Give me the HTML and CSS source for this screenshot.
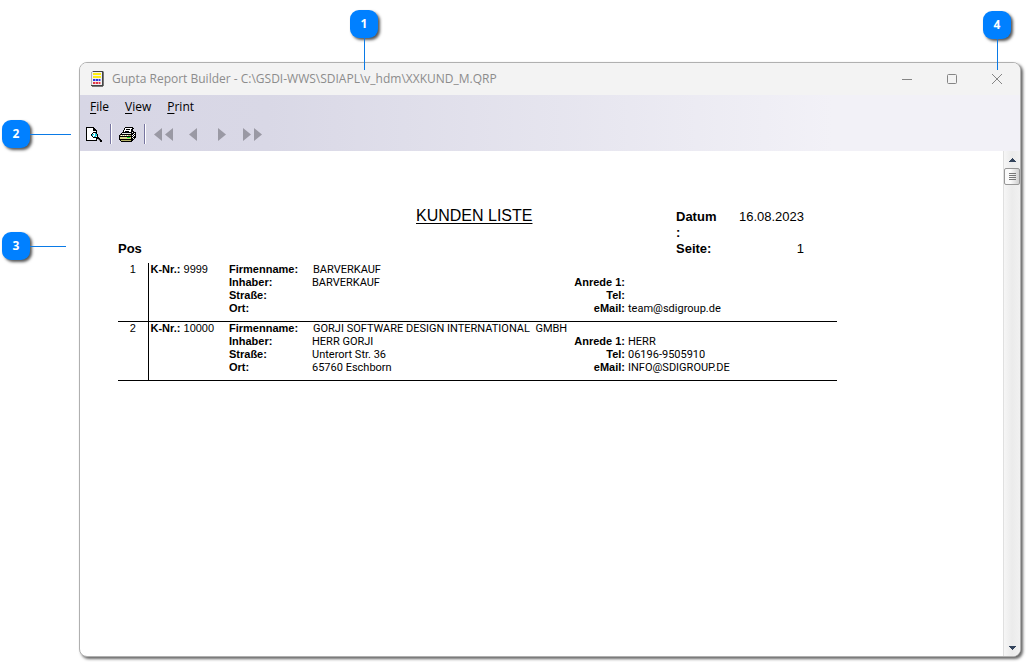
FILE: index.html
```
<!DOCTYPE html>
<html lang="de">
<head>
<meta charset="utf-8">
<title>Gupta Report Builder</title>
<link rel="stylesheet" href="styles.css">
</head>
<body>
<main class="window">
  <header class="titlebar">
    <svg class="app-icon" width="14" height="16" viewBox="0 0 14 16" shape-rendering="crispEdges">
      <path fill="#b4b4b4" d="M1 0h12v15H0V1h1z"/>
      <path fill="#444" d="M11 1h1v13h-1zM0 14h12v1H0zM2 0h10v1H2z"/>
      <path fill="#777" d="M12 1h1v14h-1zM1 15h11v1H1z"/>
      <path fill="#f0f0f0" d="M1 1h10v13H1z"/>
      <path fill="#ffee10" d="M2 2h8v2H2zM2 5h8v2H2z"/>
      <path fill="#98a0ee" d="M2 8h8v2H2z"/>
      <path fill="#3038d8" d="M2 8h2v2H2zM5 8h2v2H5zM8 8h1v2H8z"/>
      <path fill="#f2a0a8" d="M2 11h8v2H2z"/>
      <path fill="#e03848" d="M2 11h2v2H2zM5 11h2v2H5zM8 11h1v2H8z"/>
    </svg>
    <h1 class="title">Gupta Report Builder - C:\GSDI-WWS\SDIAPL\v_hdm\XXKUND_M.QRP</h1>
    <div class="controls">
      <button class="control" aria-label="Minimieren"><svg width="12" height="12" viewBox="0 0 12 12"><path d="M1 6.500h10"/></svg></button>
      <button class="control" aria-label="Maximieren"><svg width="12" height="12" viewBox="0 0 12 12"><rect x="1.500" y="1.500" width="9" height="9" rx="1"/></svg></button>
      <button class="control" aria-label="Schließen"><svg width="12" height="12" viewBox="0 0 12 12"><path d="M1 1l10 10M11 1L1 11"/></svg></button>
    </div>
  </header>
  <div class="commands">
    <nav class="menu">
      <button class="menu-item"><u>F</u>ile</button>
      <button class="menu-item"><u>V</u>iew</button>
      <button class="menu-item"><u>P</u>rint</button>
    </nav>
    <div class="toolbar">
      <button class="tool" aria-label="Preview">
        <svg width="16" height="15" viewBox="0 0 16 15" shape-rendering="crispEdges">
          <path fill="#000" d="M0 0h8v1h1v1h1v1h1v11H0z"/>
          <path fill="#fff" d="M1 1h6v3h3v9H1z"/>
          <path fill="#000" d="M8 1h1v2h1v1H7V1zM7 5h3v1h1v1h1v3h1v1h1v1h1v1h1v2h-2v-1h-1v-1h-1v-1h-1v-1H7v-1H6V9H5V7h1V6h1z"/>
          <path fill="#fff" d="M7 6h3v1h1v3H7V9H6V7h1z"/>
          <path fill="#18c8dc" d="M6 7h2v1H7v1H6zM9 6h1v1h1v2h-1v1H8V9h1z"/>
          <path fill="#888" d="M12 12h1v1h1v1h-1v-1h-1z"/>
        </svg>
      </button>
      <span class="separator"></span>
      <button class="tool" aria-label="Print">
        <svg width="17" height="15" viewBox="0 0 17 15" shape-rendering="crispEdges">
          <path fill="#000" d="M6 0h8v1h1v1h-1v2h1v1h2v6h-1v1h-1v1h-1v1h-1v1H2v-1H1v-1H0V8h1V7h1V6h1V5h1V3h1V1h1z"/>
          <path fill="#fff" d="M6 1h7v1h-1v3H5V3h1z"/>
          <path fill="#000" d="M7 2h4v1H7zM6 4h4v1H6z"/>
          <path fill="#e8e8e8" d="M3 6h9v1H3zM13 5h1v1h-1z"/>
          <path fill="#b5b268" d="M1 8h11v1H1zM2 13h10v1H2z"/>
          <path fill="#dad78c" d="M1 10h11v2H1z"/>
          <path fill="#fff" d="M2 8h1v1H2zM4 8h1v1H4zM6 8h1v1H6zM8 8h1v1H8zM14 7h1v1h-1zM15 6h1v1h-1zM13 8h1v1h-1zM15 8h1v1h-1zM14 9h1v1h-1zM13 10h1v1h-1zM14 11h1v1h-1z"/>
          <path fill="#10dd20" d="M8 10h3v1H8z"/>
        </svg>
      </button>
      <span class="separator"></span>
      <button class="tool arrow wide" aria-label="Erste Seite"><svg width="19" height="13" viewBox="0 0 19 13"><path d="M8 0v13L0 6.500zM19 0v13l-8-6.500z"/></svg></button>
      <button class="tool arrow" aria-label="Vorherige Seite"><svg width="8" height="13" viewBox="0 0 8 13"><path d="M8 0v13L0 6.500z"/></svg></button>
      <button class="tool arrow" aria-label="Nächste Seite"><svg width="8" height="13" viewBox="0 0 8 13"><path d="M0 0v13l8-6.500z"/></svg></button>
      <button class="tool arrow wide" aria-label="Letzte Seite"><svg width="19" height="13" viewBox="0 0 19 13"><path d="M0 0v13l8-6.500zM11 0v13l8-6.500z"/></svg></button>
    </div>
  </div>
  <div class="viewer">
    <article class="report">
      <header class="report-head">
        <h2 class="report-title">KUNDEN LISTE</h2>
        <dl class="meta">
          <dt>Datum :</dt><dd>16.08.2023</dd>
          <dt>Seite:</dt><dd>1</dd>
        </dl>
      </header>
      <table class="customers">
        <colgroup><col class="col-pos"><col class="col-number"><col class="col-address"><col></colgroup>
        <thead><tr><th class="pos-head" colspan="4">Pos</th></tr></thead>
        <tbody>
          <tr class="record">
            <td class="pos">1</td>
            <td class="number"><b>K-Nr.:</b> 9999</td>
            <td class="address">
              <dl class="fields">
                <dt>Firmenname:</dt><dd class="company">BARVERKAUF</dd>
                <dt>Inhaber:</dt><dd>BARVERKAUF</dd>
                <dt>Straße:</dt><dd></dd>
                <dt>Ort:</dt><dd></dd>
              </dl>
            </td>
            <td class="contact">
              <dl class="fields contact-fields">
                <dt>Anrede 1:</dt><dd></dd>
                <dt>Tel:</dt><dd></dd>
                <dt>eMail:</dt><dd>team@sdigroup.de</dd>
              </dl>
            </td>
          </tr>
          <tr class="record">
            <td class="pos">2</td>
            <td class="number"><b>K-Nr.:</b> 10000</td>
            <td class="address">
              <dl class="fields">
                <dt>Firmenname:</dt><dd class="company">GORJI SOFTWARE DESIGN INTERNATIONAL&nbsp; GMBH</dd>
                <dt>Inhaber:</dt><dd>HERR GORJI</dd>
                <dt>Straße:</dt><dd>Unterort Str. 36</dd>
                <dt>Ort:</dt><dd>65760 Eschborn</dd>
              </dl>
            </td>
            <td class="contact">
              <dl class="fields contact-fields">
                <dt>Anrede 1:</dt><dd>HERR</dd>
                <dt>Tel:</dt><dd>06196-9505910</dd>
                <dt>eMail:</dt><dd>INFO@SDIGROUP.DE</dd>
              </dl>
            </td>
          </tr>
        </tbody>
      </table>
    </article>
    <div class="scrollbar">
      <button class="scroll-arrow" aria-label="Nach oben"><svg width="7" height="4" viewBox="0 0 7 4" shape-rendering="crispEdges"><path d="M3 0h1v1h1v1h1v1h1v1H0V3h1V2h1V1h1z"/></svg></button>
      <button class="scroll-thumb" aria-label="Bildlauf"><svg width="7" height="8" viewBox="0 0 7 8" shape-rendering="crispEdges"><path d="M0 0h7v1H0zM0 2h7v1H0zM0 4h7v1H0zM0 6h7v1H0z"/></svg></button>
      <button class="scroll-arrow scroll-down" aria-label="Nach unten"><svg width="7" height="4" viewBox="0 0 7 4" shape-rendering="crispEdges"><path d="M0 0h7v1H6v1H5v1H4v1H3V3H2V2H1V1H0z"/></svg></button>
    </div>
  </div>
</main>
<div class="callout vertical callout-1"><span class="badge">1</span><span class="line"></span></div>
<div class="callout horizontal callout-2"><span class="badge">2</span><span class="line"></span></div>
<div class="callout horizontal callout-3"><span class="badge">3</span><span class="line"></span></div>
<div class="callout vertical callout-4"><span class="badge">4</span><span class="line"></span></div>
</body>
</html>
```
FILE: styles.css
```
* { box-sizing: border-box; }
body {
  margin: 0;
  min-height: 100vh;
  padding: 62px 6px 8px 79px;
  display: flex;
  position: relative;
  background: #fff;
  color: #000;
  font-family: "Liberation Sans", Arial, sans-serif;
}
h1, h2, dl, dd { margin: 0; font-weight: normal; }
button { margin: 0; padding: 0; border: 0; background: none; color: inherit; font: inherit; }
svg { display: block; }

.window {
  flex: 1;
  min-width: 0;
  display: flex;
  flex-direction: column;
  border: 1px solid #b0b0b0;
  border-radius: 8px;
  overflow: hidden;
  background: #fff;
  box-shadow: 2px 2px 3px #666;
}

/* Title bar */
.titlebar {
  display: flex;
  align-items: center;
  height: 32px;
  padding: 0 1px 0 11px;
  background: #f3f3f3;
  color: #8c8c8c;
}
.title { flex: 1; margin-left: 7px; font: 12px/18px "Open Sans", "Noto Sans", sans-serif; white-space: nowrap; }
.controls { display: flex; }
.control { width: 45px; height: 30px; display: grid; place-items: center; }
.control svg { fill: none; stroke: #858585; }

/* Menu and toolbar */
.commands { height: 56px; background: linear-gradient(90deg, #d7d6e5 0%, #d9d8e6 20%, #f2f1f7 80%, #f2f1f7 100%); }
.menu { display: flex; gap: 16px; padding: 3px 10px 0; font: 12px/18px "Open Sans", "Noto Sans", sans-serif; }
.menu u { text-underline-offset: 2px; }
.toolbar { display: flex; align-items: center; height: 36px; padding-left: 6px; }
.tool { display: grid; place-items: center; }
.separator { width: 2px; height: 20px; margin: 0 8px; border-left: 1px solid #7775a0; border-right: 1px solid #fff; }
.separator + .tool { margin-left: -1px; }
.arrow { width: 29px; height: 24px; fill: #9a99a4; }
.wide { width: 20px; }
.wide + .arrow { margin-left: 5px; }
.arrow + .wide { margin-left: 6px; }

/* Report page */
.viewer { flex: 1; display: flex; justify-content: space-between; }
.report { flex: 0 1 757px; padding: 55px 0 20px 38px; }
.report-head { display: flex; justify-content: space-between; padding-right: 33px; }
.report-title { margin-left: 298px; font-size: 16px; line-height: 20px; text-decoration: underline; text-underline-offset: 2px; white-space: nowrap; }
.meta { display: grid; grid-template-columns: 46px 82px; font-size: 13px; line-height: 16px; padding-top: 3px; }
.meta dt { font-weight: bold; }
.meta dd { text-align: right; }
.customers { width: 100%; margin-top: -16px; border-collapse: collapse; table-layout: fixed; font-size: 11px; line-height: 13px; }
.col-pos { width: 30px; }
.col-number { width: 81px; }
.col-address { width: 342px; }
.pos-head { padding: 0 0 6px; font-size: 13px; line-height: 16px; text-align: left; }
.customers td { padding: 0 0 6px; vertical-align: top; border-bottom: 1px solid #000; }
.customers .pos { text-align: center; }
.customers .number { padding-left: 2px; border-left: 1px solid #000; }
.customers .contact { padding-top: 13px; }
.fields { display: grid; grid-template-columns: 83px 1fr; grid-auto-rows: 13px; white-space: nowrap; }
.fields dt { font-weight: bold; }
.fields dd { font-family: Roboto, "Liberation Sans", sans-serif; }
.fields .company { padding-left: 1px; }
.contact-fields { grid-template-columns: 54px 1fr; column-gap: 3px; }
.contact-fields dt { text-align: right; }

/* Scroll bar */
.scrollbar { width: 17px; display: flex; flex-direction: column; border-left: 1px solid #e0e0e0; background: linear-gradient(90deg, #f6f6f6, #ebebeb 50%, #f1f1f1); }
.scroll-arrow { height: 17px; display: grid; place-items: center; fill: #34445c; }
.scroll-thumb { height: 17px; display: grid; place-items: center; border: 1px solid #979797; border-radius: 2px; background: linear-gradient(90deg, #fafafa 40%, #cfcfcf); fill: #777; }
.scroll-down { margin-top: auto; }

/* Numbered callouts lying over the window */
.callout { position: absolute; display: flex; align-items: center; }
.vertical { flex-direction: column; }
.badge {
  width: 28px;
  height: 28px;
  border-radius: 9px;
  background: #0080ff;
  box-shadow: 2px 2px 3px #555;
  color: #fff;
  font: bold 12px/28px "Noto Sans", "Open Sans", sans-serif;
  text-align: center;
}
.line { background: #0a7ae6; }
.vertical .line { width: 1px; height: 32px; }
.horizontal .line { width: 41px; height: 1px; }
.callout-1 { left: 350px; top: 10px; }
.callout-2 { left: 2px; top: 120px; }
.callout-3 { left: 2px; top: 232px; }
.callout-3 .line { width: 36px; }
.callout-4 { right: 16px; top: 11px; }
.callout-4 .line { height: 31px; }
```
